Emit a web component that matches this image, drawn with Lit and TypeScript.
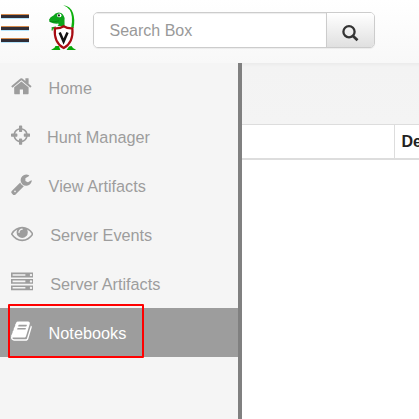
import { LitElement, html, css, svg } from "lit";
import { customElement, property } from "lit/decorators.js";

const ICONS: Record<string, { x: number; w: number; d: string }> = {
  home: { x: 64, w: 1664, d: "M1472 992v480q0 26-19 45t-45 19h-384v-384h-256v384h-384q-26 0-45-19t-19-45v-480q0-1 .5-3t.5-3l575-474 575 474q1 2 1 6zm223-69l-62 74q-8 9-21 11h-3q-13 0-21-7l-692-577-692 577q-12 8-24 7-13-2-21-11l-62-74q-8-10-7-23.5t11-21.5l719-599q32-26 76-26t76 26l244 204v-195q0-14 9-23t23-9h192q14 0 23 9t9 23v408l219 182q10 8 11 21.5t-7 23.5z" },
  crosshairs: { x: 128, w: 1536, d: "M1325 1024h-109q-26 0-45-19t-19-45v-128q0-26 19-45t45-19h109q-32-108-112.5-188.5t-188.5-112.5v109q0 26-19 45t-45 19h-128q-26 0-45-19t-19-45v-109q-108 32-188.5 112.5t-112.5 188.5h109q26 0 45 19t19 45v128q0 26-19 45t-45 19h-109q32 108 112.5 188.5t188.5 112.5v-109q0-26 19-45t45-19h128q26 0 45 19t19 45v109q108-32 188.5-112.5t112.5-188.5zm339-192v128q0 26-19 45t-45 19h-143q-37 161-154.5 278.5t-278.5 154.5v143q0 26-19 45t-45 19h-128q-26 0-45-19t-19-45v-143q-161-37-278.5-154.5t-154.5-278.5h-143q-26 0-45-19t-19-45v-128q0-26 19-45t45-19h143q37-161 154.5-278.5t278.5-154.5v-143q0-26 19-45t45-19h128q26 0 45 19t19 45v143q161 37 278.5 154.5t154.5 278.5h143q26 0 45 19t19 45z" },
  wrench: { x: 64, w: 1664, d: "M448 1472q0-26-19-45t-45-19-45 19-19 45 19 45 45 19 45-19 19-45zm644-420l-682 682q-37 37-90 37-52 0-91-37l-106-108q-38-36-38-90 0-53 38-91l681-681q39 98 114.5 173.5t173.5 114.5zm634-435q0 39-23 106-47 134-164.5 217.5t-258.5 83.5q-185 0-316.5-131.5t-131.5-316.5 131.5-316.5 316.5-131.5q58 0 121.5 16.5t107.5 46.5q16 11 16 28t-16 28l-293 169v224l193 107q5-3 79-48.5t135.5-81 70.5-35.5q15 0 23.5 10t8.5 25z" },
  eye: { x: 0, w: 1792, d: "M1664 960q-152-236-381-353 61 104 61 225 0 185-131.5 316.5t-316.5 131.5-316.5-131.5-131.5-316.5q0-121 61-225-229 117-381 353 133 205 333.5 326.5t434.5 121.5 434.5-121.5 333.5-326.5zm-720-384q0-20-14-34t-34-14q-125 0-214.5 89.5t-89.5 214.5q0 20 14 34t34 14 34-14 14-34q0-86 61-147t147-61q20 0 34-14t14-34zm848 384q0 34-20 69-140 230-376.5 368.5t-499.5 138.5-499.5-139-376.5-368q-20-35-20-69t20-69q140-229 376.5-368t499.5-139 499.5 139 376.5 368q20 35 20 69z" },
  server: { x: 0, w: 1792, d: "M128 1408h1024v-128h-1024v128zm0-512h1024v-128h-1024v128zm1568 448q0-40-28-68t-68-28-68 28-28 68 28 68 68 28 68-28 28-68zm-1568-960h1024v-128h-1024v128zm1568 448q0-40-28-68t-68-28-68 28-28 68 28 68 68 28 68-28 28-68zm0-512q0-40-28-68t-68-28-68 28-28 68 28 68 68 28 68-28 28-68zm96 832v384h-1792v-384h1792zm0-512v384h-1792v-384h1792zm0-512v384h-1792v-384h1792z" },
  book: { x: 64, w: 1664, d: "M1703 478q40 57 18 129l-275 906q-19 64-76.5 107.5t-122.5 43.5h-923q-77 0-148.5-53.5t-99.5-131.5q-24-67-2-127 0-4 3-27t4-37q1-8-3-21.5t-3-19.5q2-11 8-21t16.5-23.5 16.5-23.5q23-38 45-91.5t30-91.5q3-10 .5-30t-.5-28q3-11 17-28t17-23q21-36 42-92t25-90q1-9-2.5-32t.5-28q4-13 22-30.5t22-22.5q19-26 42.5-84.5t27.5-96.5q1-8-3-25.5t-2-26.5q2-8 9-18t18-23 17-21q8-12 16.5-30.5t15-35 16-36 19.5-32 26.5-23.5 36-11.5 47.5 5.5l-1 3q38-9 51-9h761q74 0 114 56t18 130l-274 906q-36 119-71.5 153.5t-128.5 34.5h-869q-27 0-38 15-11 16-1 43 24 70 144 70h923q29 0 56-15.5t35-41.5l300-987q7-22 5-57 38 15 59 43zm-1064 2q-4 13 2 22.5t20 9.5h608q13 0 25.5-9.5t16.5-22.5l21-64q4-13-2-22.5t-20-9.5h-608q-13 0-25.5 9.5t-16.5 22.5zm-83 256q-4 13 2 22.5t20 9.5h608q13 0 25.5-9.5t16.5-22.5l21-64q4-13-2-22.5t-20-9.5h-608q-13 0-25.5 9.5t-16.5 22.5z" },
};

const NAV = [
  { icon: "home", label: "Home" },
  { icon: "crosshairs", label: "Hunt Manager" },
  { icon: "wrench", label: "View Artifacts" },
  { icon: "eye", label: "Server Events" },
  { icon: "server", label: "Server Artifacts" },
  { icon: "book", label: "Notebooks" },
];

@customElement("nav-item")
class NavItem extends LitElement {
  @property() icon = "home";
  @property() label = "";
  @property({ type: Boolean, reflect: true }) active = false;

  static styles = css`
    :host { display: flex; align-items: center; height: 49px; padding-left: 10.8px; box-sizing: border-box; color: #9d9d9d; position: relative; }
    :host([active]) { background: #9d9d9d; color: #fff; }
    .icon { display: block; height: 22.4px; fill: currentColor; margin-bottom: 3px; flex: none; }
    .label { margin-left: 17px; font-size: 16.25px; line-height: 20px; padding-top: 0; white-space: nowrap; }
    .mark { position: absolute; left: 8px; top: -4px; width: 136px; height: 54px; box-sizing: border-box; border: 2px solid #f00; border-radius: 1px; }
  `;

  render() {
    const i = ICONS[this.icon];
    return html`
      <svg class="icon" width=${i.w / 80} viewBox="${i.x} 0 ${i.w} 1792">${svg`<path d=${i.d}></path>`}</svg>
      <span class="label">${this.label}</span>
      ${this.active ? html`<div class="mark"></div>` : null}
    `;
  }
}

@customElement("app-root")
class AppRoot extends LitElement {
  static styles = css`
    :host { display: flex; flex-direction: column; width: 419px; height: 419px; overflow: hidden; background: #fff; font-family: "Liberation Sans", Arial, sans-serif; font-size: 16px; }
    .top { display: flex; align-items: flex-start; flex: none; height: 63px; background: linear-gradient(#fff, #f8f8f8); }
    .menu { display: grid; gap: 7px; width: 28px; margin: 14px 0 0 1px; }
    .bar { height: 5px; background: linear-gradient(#d48a4c 0 1px, #302d36 1px 4px, #b5e4fb 4px); }
    .logo { display: block; width: 32px; height: 48px; margin: 4px 0 0 19px; }
    .search { display: flex; margin: 12px 0 0 13px; width: 282px; height: 36px; box-sizing: border-box; border: 1px solid #ccc; border-radius: 5px; overflow: hidden; box-shadow: 0 1px 1px rgba(0,0,0,.06); }
    .field { flex: 1; background: #fff; color: #999; line-height: 35px; padding-left: 15.5px; box-shadow: inset 0 1px 1px rgba(0,0,0,.075); }
    .go { display: flex; width: 48px; box-sizing: border-box; border-left: 1px solid #ccc; background: linear-gradient(#fff, #e0e0e0); }
    .go svg { width: 18px; height: 18px; margin: 11px 0 0 14px; }
    .body { display: flex; flex: 1; min-height: 0; }
    .side { width: 238px; background: #f5f5f5; border-right: 4px solid #808080; flex: none; }
    .main { flex: 1; min-width: 0; }
    .strip { height: 61px; background: linear-gradient(#ebebeb, #f3f3f3 4px, #f4f4f4); }
    .row { display: flex; height: 36px; box-sizing: border-box; border-top: 1px solid #ddd; border-bottom: 2px solid #ddd; }
    .blank { width: 152px; border-right: 1px solid #ddd; flex: none; }
    .head { padding-left: 6.5px; line-height: 34px; font-weight: bold; color: #222; white-space: nowrap; }
  `;

  render() {
    return html`
      <div class="top">
        <div class="menu"><div class="bar"></div><div class="bar"></div><div class="bar"></div></div>
        <svg class="logo" viewBox="48 4 32 48">
          <path d="M63.2 5.3Q70.5 6 73 13Q75.2 19.5 73.6 28L71.2 27.5Q73.4 16 69.8 10Q67 6.6 63.2 5.3Z" fill="#0db00d"></path>
          <path d="M49 19.8Q50 16.8 53.5 15.5Q55 12.6 58.5 12.4Q62 12.4 63.5 15.5Q65 17.5 64.5 20.5L64.6 26H57.5Q59.4 24.6 58.3 23.6Q54 24.2 49.8 22Z" fill="#0ca51b"></path>
          <path d="M49.5 21.4Q54 22.6 59 20.8" fill="none" stroke="#067810" stroke-width=".7"></path>
          <ellipse cx="59.3" cy="15.4" rx="2.2" ry="1.9" fill="#fff"></ellipse><circle cx="58.9" cy="15.4" r="1.1" fill="#222"></circle>
          <path d="M56 27L51.6 27.8M52.6 27.7L52 30.5M53.4 27.5L54.7 30" fill="none" stroke="#16a51a" stroke-width="1.2"></path>
          <path d="M51 50L54.5 47.7L55.5 46H58.8L60.4 50ZM66.5 50L69 46.4L71.5 46L73 48L76.2 50Z" fill="#08a708"></path>
          <path d="M54.9 28.3Q60 28.6 63.7 26.3Q67.4 28.6 72.4 28.3Q73.6 42.5 63.7 48Q53.6 42.5 54.9 28.3Z" fill="#fff" stroke="#a80c12" stroke-width="2.2"></path>
          <path d="M59.7 32.4L63.6 41.6L67.5 32.4" fill="none" stroke="#111" stroke-width="2.5"></path>
        </svg>
        <div class="search">
          <div class="field">Search Box</div>
          <div class="go"><svg viewBox="0 0 18 18" fill="none" stroke="#333"><circle cx="8" cy="7.7" r="5.6" stroke-width="2.3"></circle><path d="M12 12L16.5 16.2" stroke-width="2.8"></path></svg></div>
        </div>
      </div>
      <div class="body">
        <div class="side">${NAV.map((n) => html`<nav-item .icon=${n.icon} .label=${n.label} ?active=${n.label === "Notebooks"}></nav-item>`)}</div>
        <div class="main">
          <div class="strip"></div>
          <div class="row"><div class="blank"></div><div class="head">Description</div></div>
        </div>
      </div>
    `;
  }
}
